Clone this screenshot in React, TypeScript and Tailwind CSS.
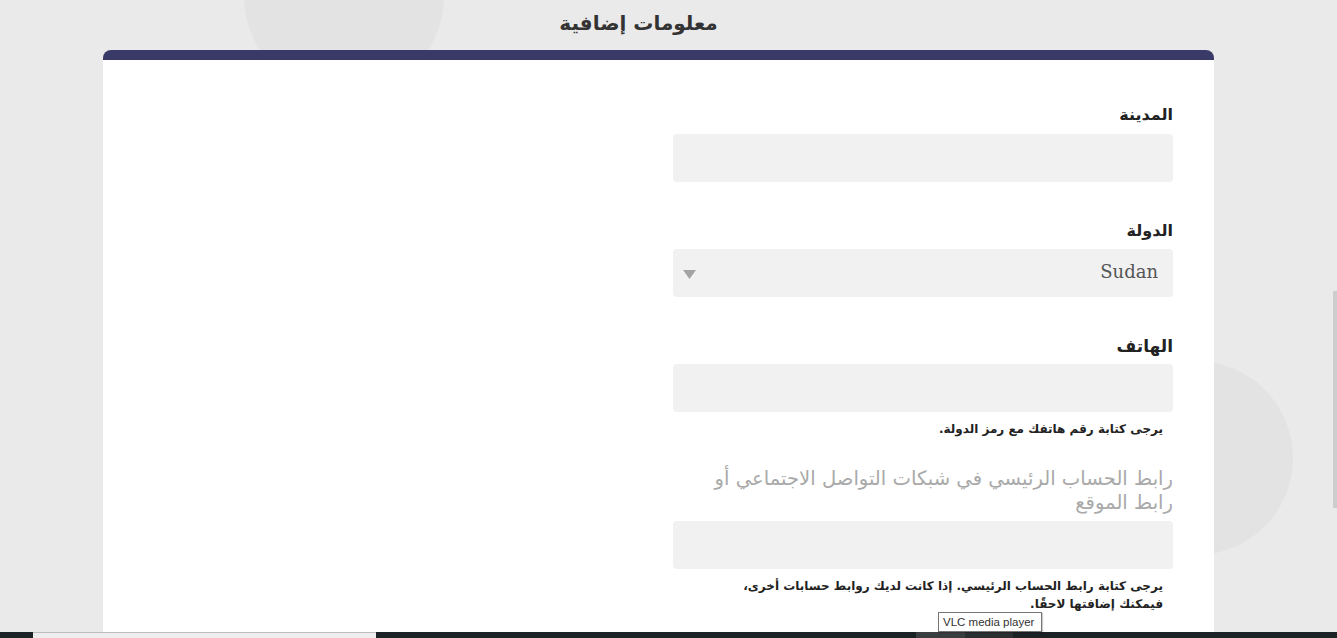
import React from "react";

const arabic = { fontFamily: '"DejaVu Sans", "Noto Sans", sans-serif' };

function Field({ label, children }: { label: React.ReactNode; children?: React.ReactNode }) {
  return <div className="flex flex-col">{label}{children}</div>;
}

export default function App() {
  return (
    <div className="relative h-[638px] w-[1337px] overflow-hidden bg-[#eaeaea] flex flex-col" style={arabic}>
      {/* decorative circles */}
      <div className="absolute left-[244px] top-[-104px] h-[200px] w-[200px] rounded-full bg-[#e3e3e3]" />
      <div className="absolute left-[1099px] top-[361px] h-[194px] w-[194px] rounded-full bg-[#e3e3e3]" />
      {/* scrollbar thumb */}
      <div className="absolute right-0 top-[291px] h-[217px] w-[4px] bg-[#cdcdcd]" />

      <div className="relative flex-1 overflow-hidden flex flex-col">
        <div className="h-[50px] flex items-center justify-center pr-[60px]">
          <h1 dir="rtl" className="text-[20px] font-bold text-[#333] leading-none mt-[-4px]">معلومات إضافية</h1>
        </div>
        <div className="ml-[103px] w-[1111px] flex-1 bg-white rounded-t-[8px] border-t-[10px] border-[#3a3a69]">
          <div dir="rtl" className="pr-[41px] pt-[43px]">
            <div className="w-[500px] flex flex-col">
              <Field
                label={<label className="h-[24px] leading-[24px] text-[16px] font-bold text-[#222]">المدينة</label>}
              >
                <div className="mt-[7px] h-[48px] rounded-[4px] bg-[#f1f1f1]" />
              </Field>

              <div className="mt-[37px]">
                <Field
                  label={<label className="h-[24px] leading-[24px] text-[16px] font-bold text-[#222]">الدولة</label>}
                >
                  <div className="mt-[6px] h-[48px] rounded-[4px] bg-[#f1f1f1] flex items-center justify-between pr-[15px] pl-[10px]">
                    <span className="text-[18px] text-[#555] mt-[-3px]" style={{ fontFamily: '"DejaVu Serif", "Liberation Serif", serif' }}>Sudan</span>
                    <svg width="13" height="9" viewBox="0 0 13 9" className="mt-[2px]">
                      <polygon points="0,0 13,0 6.5,9" fill="#a3a3a3" />
                    </svg>
                  </div>
                </Field>
              </div>

              <div className="mt-[37px]">
                <Field
                  label={<label className="h-[24px] leading-[24px] text-[17px] font-bold text-[#222]">الهاتف</label>}
                >
                  <div className="mt-[6px] h-[48px] rounded-[4px] bg-[#f1f1f1]" />
                  <p className="mt-[8px] pr-[10px] text-[12px] font-bold leading-[18px] text-[#222]">
                    يرجى كتابة رقم هاتفك مع رمز الدولة.
                  </p>
                </Field>
              </div>

              <div className="mt-[29px]">
                <Field
                  label={
                    <label className="leading-[24px] text-[19.6px] text-[#a9a9a9]">
                      رابط الحساب الرئيسي في شبكات التواصل الاجتماعي أو رابط الموقع
                    </label>
                  }
                >
                  <div className="mt-[6px] h-[48px] rounded-[4px] bg-[#f1f1f1]" />
                  <p className="mt-[8px] pr-[10px] pl-[30px] text-[12px] font-bold leading-[18px] text-[#222]">
                    يرجى كتابة رابط الحساب الرئيسي. إذا كانت لديك روابط حسابات أخرى، فيمكنك إضافتها لاحقًا.
                  </p>
                </Field>
              </div>
            </div>
          </div>
        </div>
      </div>

      {/* taskbar strip */}
      <div className="relative h-[6px] flex bg-[#1b2226]">
        <div className="ml-[33px] w-[343px] bg-[#eeeeee] border-t border-[#bdbdbd]" />
        <div className="ml-[540px] w-[49px] bg-[#3b3e41]" />
        <div className="w-[48px] bg-[#2b2f31]" />
      </div>

      {/* tooltip */}
      <div
        className="absolute left-[938px] top-[612px] h-[20px] w-[104px] border border-[#767676] bg-white text-[11.5px] leading-[18px] whitespace-nowrap text-[#333] px-[4px] shadow-[1px_1px_1px_rgba(0,0,0,0.2)]"
        style={{ fontFamily: '"Liberation Sans", Arial, sans-serif' }}
      >
        VLC media player
      </div>
    </div>
  );
}
